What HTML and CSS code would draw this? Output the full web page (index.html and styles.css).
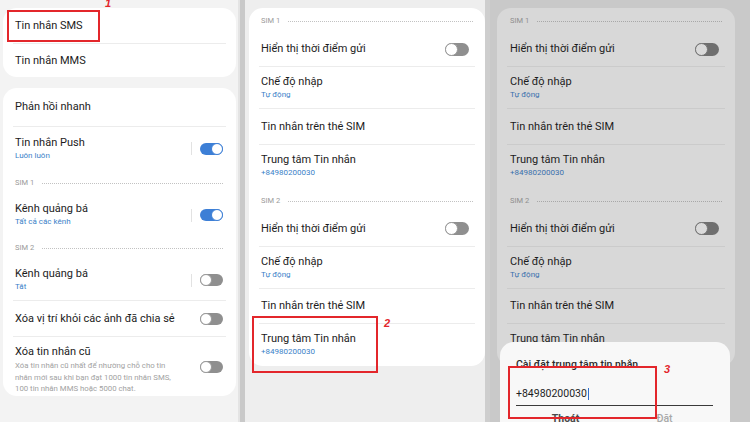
FILE: index.html
```html
<!DOCTYPE html>
<html lang="vi">
<head>
<meta charset="utf-8">
<title>Cài đặt tin nhắn</title>
<link rel="stylesheet" href="styles.css">
</head>
<body>
<div class="screen">
  <section class="panel p1">
    <div class="card c1">
      <div class="row s35 mark1"><span class="t">Tin nhắn SMS</span></div>
      <div class="hr"></div>
      <div class="row s33"><span class="t">Tin nhắn MMS</span></div>
    </div>
    <div class="card c2">
      <div class="row s38"><span class="t">Phản hồi nhanh</span></div>
      <div class="hr"></div>
      <div class="row d43">
        <div class="tx"><div class="t">Tin nhắn Push</div><div class="sub">Luôn luôn</div></div>
        <span class="vbar"></span><span class="tg on"><i></i></span>
      </div>
      <div class="hdr h1"><span>SIM 1</span><span class="dots"></span></div>
      <div class="row d40">
        <div class="tx"><div class="t">Kênh quảng bá</div><div class="sub">Tất cả các kênh</div></div>
        <span class="vbar"></span><span class="tg on"><i></i></span>
      </div>
      <div class="hdr h1"><span>SIM 2</span><span class="dots"></span></div>
      <div class="row d40">
        <div class="tx"><div class="t">Kênh quảng bá</div><div class="sub">Tắt</div></div>
        <span class="vbar"></span><span class="tg"><i></i></span>
      </div>
      <div class="hr"></div>
      <div class="row s35"><span class="t">Xóa vị trí khỏi các ảnh đã chia sẻ</span><span class="tg"><i></i></span></div>
      <div class="hr"></div>
      <div class="row long">
        <div class="tx"><div class="t">Xóa tin nhắn cũ</div><div class="desc">Xóa tin nhắn cũ nhất để nhường chỗ cho tin<br>nhắn mới sau khi bạn đạt 1000 tin nhắn SMS,<br>100 tin nhắn MMS hoặc 5000 chat.</div></div>
        <span class="tg"><i></i></span>
      </div>
    </div>
    <span class="num n1">1</span>
  </section>

  <div class="gutter"></div>

  <section class="panel p2">
    <div class="card">
      <div class="hdr h0"><span>SIM 1</span><span class="dots"></span></div>
      <div class="row s34"><span class="t">Hiển thị thời điểm gửi</span><span class="tg"><i></i></span></div>
      <div class="hr"></div>
      <div class="row d41"><div class="tx"><div class="t">Chế độ nhập</div><div class="sub">Tự động</div></div></div>
      <div class="hr"></div>
      <div class="row s35"><span class="t">Tin nhắn trên thẻ SIM</span></div>
      <div class="hr"></div>
      <div class="row d41"><div class="tx"><div class="t">Trung tâm Tin nhắn</div><div class="sub">+84980200030</div></div></div>
      <div class="hdr h2"><span>SIM 2</span><span class="dots"></span></div>
      <div class="row s35"><span class="t">Hiển thị thời điểm gửi</span><span class="tg"><i></i></span></div>
      <div class="hr"></div>
      <div class="row d41"><div class="tx"><div class="t">Chế độ nhập</div><div class="sub">Tự động</div></div></div>
      <div class="hr"></div>
      <div class="row s34"><span class="t">Tin nhắn trên thẻ SIM</span></div>
      <div class="hr"></div>
      <div class="row d42 mark2"><div class="tx"><div class="t">Trung tâm Tin nhắn</div><div class="sub">+84980200030</div></div></div>
    </div>
    <span class="num n2">2</span>
  </section>

  <section class="panel p3">
    <div class="card">
      <div class="hdr h0"><span>SIM 1</span><span class="dots"></span></div>
      <div class="row s34"><span class="t">Hiển thị thời điểm gửi</span><span class="tg"><i></i></span></div>
      <div class="hr"></div>
      <div class="row d41"><div class="tx"><div class="t">Chế độ nhập</div><div class="sub">Tự động</div></div></div>
      <div class="hr"></div>
      <div class="row s35"><span class="t">Tin nhắn trên thẻ SIM</span></div>
      <div class="hr"></div>
      <div class="row d41"><div class="tx"><div class="t">Trung tâm Tin nhắn</div><div class="sub">+84980200030</div></div></div>
      <div class="hdr h2"><span>SIM 2</span><span class="dots"></span></div>
      <div class="row s35"><span class="t">Hiển thị thời điểm gửi</span><span class="tg"><i></i></span></div>
      <div class="hr"></div>
      <div class="row d41"><div class="tx"><div class="t">Chế độ nhập</div><div class="sub">Tự động</div></div></div>
      <div class="hr"></div>
      <div class="row s34"><span class="t">Tin nhắn trên thẻ SIM</span></div>
      <div class="hr"></div>
      <div class="row d42"><div class="tx"><div class="t">Trung tâm Tin nhắn</div><div class="sub">+84980200030</div></div></div>
    </div>
    <div class="dialog">
      <div class="dtitle">Cài đặt trung tâm tin nhắn</div>
      <div class="field mark3"><span class="val">+84980200030</span><span class="caret"></span></div>
      <div class="btns"><span class="btn">Thoát</span><span class="btn dis">Đặt</span></div>
    </div>
    <span class="num n3">3</span>
  </section>
</div>
</body>
</html>
```

FILE: styles.css
```css
* { box-sizing: border-box; }
html, body { margin: 0; padding: 0; }
body {
  width: 750px;
  height: 422px;
  overflow: hidden;
  font-family: Roboto, "Noto Sans", "Liberation Sans", sans-serif;
  background: #f3f3f3;
}
.screen { display: flex; width: 750px; height: 422px; }
.panel { position: relative; height: 422px; overflow: hidden; }

.p1 { width: 240px; padding: 8px 3px 0 3px; background: #f3f3f3; border-right: 2px solid #e4e4e4; }
.gutter { width: 5px; background: #c9c9c9; }
.p2 { width: 245px; padding: 8px 0 0 4px; background: #eeeeee; border-right: 5px solid #cecece; }
.p3 { flex: 1; padding: 8px 15px 0 7px; background: #c9c9c9; }

.card { background: #ffffff; border-radius: 14px; }
.p1 .card { width: 233px; }
.c1 { margin-bottom: 11px; }
.p2 .card { width: 236px; }
.p3 .card { width: 238px; background: #d8d8d8; }

.row { display: flex; align-items: center; padding: 0 12px; }
.p3 .row { padding-left: 13px; }
.s33 { height: 33px; }
.s34 { height: 34px; }
.s35 { height: 35px; }
.s38 { height: 38px; }
.d40 { height: 40px; }
.d41 { height: 41px; }
.d42 { height: 42px; }
.d43 { height: 43px; }
.long { align-items: flex-start; padding-top: 8px; height: 59px; }
.long .tg { margin-top: 16px; }

.tx { flex: 1; display: flex; flex-direction: column; }
.t { flex: 1; font-size: 11px; line-height: 14px; color: #1c1c1c; }
.sub { font-size: 8px; line-height: 12px; color: #3b7fc8; }
.p3 .sub { color: #3a70ad; }
.desc { font-size: 7.8px; line-height: 11.5px; color: #a2a2a2; margin-top: 1px; }

.hr { height: 1px; background: #ececec; margin: 0 10px; }
.p3 .hr { background: #cbcbcb; }

.hdr { display: flex; align-items: center; gap: 8px; padding: 0 12px; font-size: 7.5px; line-height: 10px; color: #9a9a9a; }
.p3 .hdr { padding-left: 13px; color: #8e8e8e; }
.hdr.h1 { height: 25px; padding-top: 8px; align-items: flex-start; }
.hdr.h0 { height: 24px; padding-top: 8px; align-items: flex-start; }
.hdr.h2 { height: 25px; padding-top: 10px; align-items: flex-start; }
.dots { flex: 1; height: 1px; margin-top: 5px; background: repeating-linear-gradient(to right, #c2c2c2 0 1px, transparent 1px 2px); }
.p3 .dots { background: repeating-linear-gradient(to right, #a8a8a8 0 1px, transparent 1px 2px); }

.vbar { width: 1px; height: 13px; background: #e2e2e2; margin-right: 8px; }
.tg { display: flex; width: 23px; height: 12px; border-radius: 6px; background: #8f8f8f; flex: none; }
.p2 .tg, .p3 .tg { width: 24px; height: 13px; border-radius: 7px; }
.tg i { display: block; width: 12px; height: 12px; border-radius: 50%; background: #ffffff; border: 1px solid #9a9a9a; }
.p2 .tg i, .p3 .tg i { width: 13px; height: 13px; }
.p3 .tg { background: #6f6f6f; }
.p3 .tg i { background: #dadada; border-color: #777; }
.tg.on { background: #3d7fd6; justify-content: flex-end; }
.tg.on i { border-color: #3d7fd6; }
.row .tg { margin-left: auto; }
.p1 .row .tg { margin-right: 1px; }
.p2 .row .tg, .p3 .row .tg { margin-right: 4px; }

/* annotations */
.mark1 { position: relative; }
.mark1::after { content: ""; position: absolute; left: 4px; top: 2px; width: 89px; height: 28px; border: 2px solid #e3262b; }
.mark2 { position: relative; }
.mark2::after { content: ""; position: absolute; left: 3px; top: -8px; width: 122px; height: 53px; border: 2px solid #e3262b; }
.num { position: absolute; color: #e3262b; font-family: "Liberation Sans", sans-serif; font-style: italic; font-weight: 700; font-size: 11px; line-height: 11px; }
.n1 { left: 105px; top: -2px; }
.n2 { left: 139px; top: 318px; }
.n3 { left: 174px; top: 364px; }

.dialog { position: absolute; left: 10px; top: 342px; width: 230px; height: 90px; background: #f8f8f8; border-radius: 14px 14px 0 0; padding: 16px 16px 0 16px; }
.dtitle { font-size: 10.5px; line-height: 14px; color: #2b2b2b; font-weight: 500; }
.field { position: relative; display: flex; align-items: center; height: 24px; margin-top: 10px; margin-right: 1px; border-bottom: 1px solid #3a3a3a; }
.val { font-size: 10.5px; color: #1e1e1e; }
.caret { width: 1px; height: 12px; background: #2f6fd0; margin-left: 1px; }
.mark3::after { content: ""; position: absolute; left: -8px; top: -16px; width: 145px; height: 49px; border: 2px solid #e3262b; }
.btns { display: flex; margin-top: 6px; font-size: 10.5px; font-weight: 700; }
.btn { width: 50%; text-align: center; color: #4a4a4a; }
.btn.dis { color: #a8a8a8; font-weight: 500; }
```
